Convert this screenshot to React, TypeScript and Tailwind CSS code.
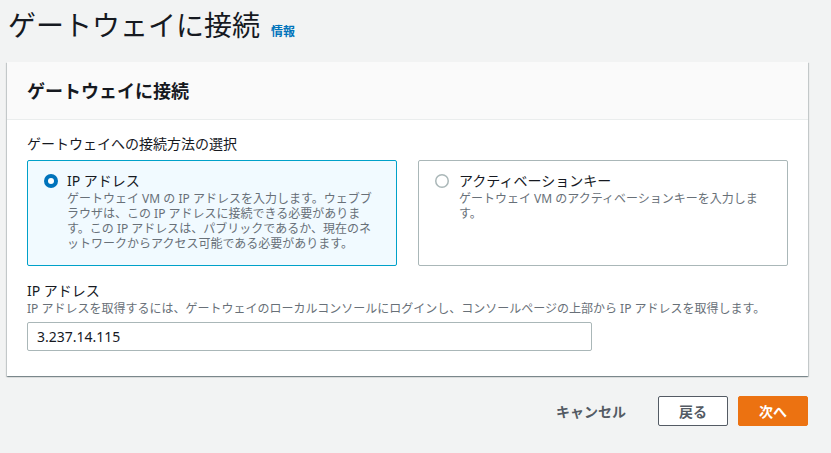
import React from "react";

const FONT = { fontFamily: '"Noto Sans", "Noto Sans CJK JP", sans-serif' };

type TileProps = {
  title: string;
  lines: string[];
  selected?: boolean;
};

function Radio({ selected }: { selected?: boolean }) {
  if (selected) {
    return (
      <svg width="14" height="14" viewBox="0 0 14 14" className="shrink-0">
        <circle cx="7" cy="7" r="7" fill="#0073bb" />
        <circle cx="7" cy="7" r="3" fill="#ffffff" />
      </svg>
    );
  }
  return (
    <svg width="14" height="14" viewBox="0 0 14 14" className="shrink-0">
      <circle cx="7" cy="7" r="6.25" fill="#ffffff" stroke="#aab7b8" strokeWidth="1.5" />
    </svg>
  );
}

function Tile({ title, lines, selected }: TileProps) {
  return (
    <div
      className={
        selected
          ? "flex gap-[9px] rounded-[2px] border border-[#00a1c9] bg-[#f1faff] pl-4 pr-3 pt-[10px] pb-[14px]"
          : "flex gap-[10px] rounded-[2px] border border-[#aab7b8] bg-white pl-4 pr-3 pt-[10px] pb-[14px]"
      }
    >
      <div className="flex h-5 items-center">
        <Radio selected={selected} />
      </div>
      <div className="flex flex-col">
        <div className="text-[14px] leading-5 text-[#16191f]">{title}</div>
        <div className="text-[12px] leading-[15px] text-[#687078]">
          {lines.map((l) => (
            <div key={l} className="whitespace-nowrap">
              {l}
            </div>
          ))}
        </div>
      </div>
    </div>
  );
}

export default function App() {
  return (
    <div className="min-h-[453px] bg-[#f2f3f3] pl-[7px] pr-[23px]" style={FONT}>
      {/* ページタイトル */}
      <div className="flex items-baseline pl-px pt-[7px] pb-[19px]">
        <h1 className="text-[28px] font-normal leading-9 text-[#16191f]">ゲートウェイに接続</h1>
        <span className="ml-[11px] text-[12px] font-bold text-[#0073bb]">情報</span>
      </div>

      {/* コンテナ */}
      <div className="bg-white shadow-[0_1px_1px_0_rgba(0,28,36,0.3),1px_1px_1px_0_rgba(0,28,36,0.15),-1px_1px_1px_0_rgba(0,28,36,0.15)]">
        <div className="flex h-[58px] items-center border-b border-[#eaeded] bg-[#fafafa] px-5">
          <h2 className="text-[18px] font-bold leading-6 text-[#16191f]">ゲートウェイに接続</h2>
        </div>

        <div className="px-5 pt-[14px] pb-[25px]">
          <div className="text-[14px] leading-5 text-[#16191f]">ゲートウェイへの接続方法の選択</div>
          <div className="mt-[6px] grid grid-cols-2 gap-[21px]">
            <Tile
              selected
              title="IP アドレス"
              lines={[
                "ゲートウェイ VM の IP アドレスを入力します。ウェブブ",
                "ラウザは、この IP アドレスに接続できる必要がありま",
                "す。この IP アドレスは、パブリックであるか、現在のネ",
                "ットワークからアクセス可能である必要があります。",
              ]}
            />
            <Tile
              title="アクティベーションキー"
              lines={["ゲートウェイ VM のアクティベーションキーを入力しま", "す。"]}
            />
          </div>

          <div className="mt-[15px] text-[14px] leading-5 text-[#16191f]">IP アドレス</div>
          <div className="text-[12px] leading-4 text-[#687078]">
            IP アドレスを取得するには、ゲートウェイのローカルコンソールにログインし、コンソールページの上部から IP アドレスを取得します。
          </div>
          <input
            readOnly
            value="3.237.14.115"
            className="mt-[5px] h-[29px] w-[565px] rounded-[2px] border border-[#aab7b8] px-[9px] text-[14px] text-[#16191f] outline-none"
            style={FONT}
          />
        </div>
      </div>

      {/* フッターボタン */}
      <div className="mt-5 flex items-center justify-end">
        <button className="h-[30px] px-5 text-[14px] font-bold text-[#545b64]">キャンセル</button>
        <button className="ml-3 h-[30px] rounded-[2px] border border-[#545b64] bg-white px-5 text-[14px] font-bold text-[#545b64]">
          戻る
        </button>
        <button className="ml-[10px] h-[30px] rounded-[2px] border border-[#ec7211] bg-[#ec7211] px-5 text-[14px] font-bold text-white">
          次へ
        </button>
      </div>
    </div>
  );
}
